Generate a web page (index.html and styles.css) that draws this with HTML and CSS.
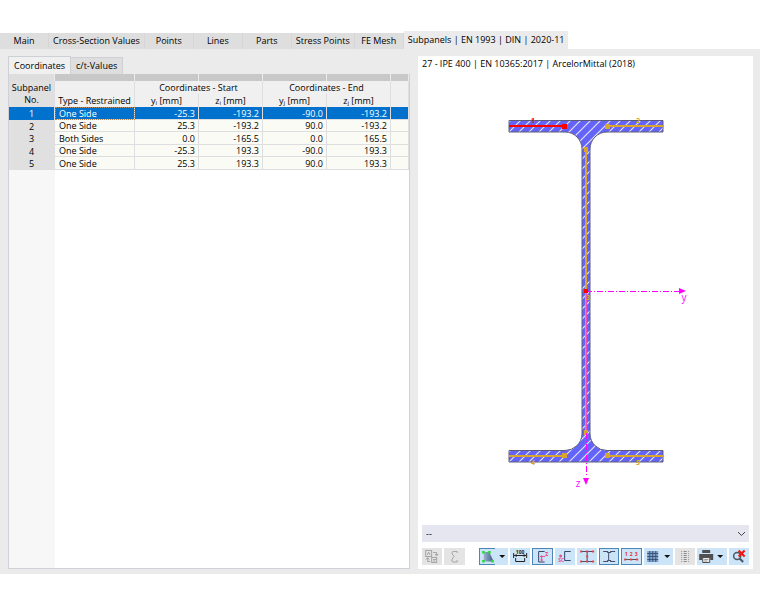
FILE: index.html
```
<!DOCTYPE html>
<html lang="en">
<head>
    <meta charset="UTF-8">
    <meta name="viewport" content="width=device-width, initial-scale=1.0">
    <title>Cross-Section - Subpanels</title>
    <link rel="stylesheet" href="styles.css">
</head>
<body>
    <div class="tabs" role="tablist">
        <button type="button" class="tab" role="tab">Main</button>
        <button type="button" class="tab" role="tab">Cross-Section Values</button>
        <button type="button" class="tab" role="tab">Points</button>
        <button type="button" class="tab" role="tab">Lines</button>
        <button type="button" class="tab" role="tab">Parts</button>
        <button type="button" class="tab" role="tab">Stress Points</button>
        <button type="button" class="tab" role="tab">FE Mesh</button>
        <button type="button" class="tab active" role="tab" aria-selected="true">Subpanels | EN 1993 | DIN | 2020-11</button>
    </div>
    <main class="content">
        <section class="data">
            <div class="subtabs" role="tablist">
                <button type="button" class="subtab active" role="tab" aria-selected="true">Coordinates</button>
                <button type="button" class="subtab" role="tab">c/t-Values</button>
            </div>
            <div class="table-frame">
                <table>
                    <colgroup>
                        <col class="col-no">
                        <col class="col-type">
                        <col class="col-value">
                        <col class="col-value">
                        <col class="col-value">
                        <col class="col-value">
                        <col>
                    </colgroup>
                    <thead>
                        <tr class="band">
                            <td></td><td></td><td></td><td></td><td></td><td></td><td></td>
                        </tr>
                        <tr>
                            <th rowspan="2" class="no">Subpanel<br>No.</th>
                            <th rowspan="2">Type - Restrained</th>
                            <th colspan="2" class="group">Coordinates - Start</th>
                            <th colspan="2" class="group">Coordinates - End</th>
                            <th rowspan="2"></th>
                        </tr>
                        <tr>
                            <th>y<sub>i</sub> [mm]</th>
                            <th>z<sub>i</sub> [mm]</th>
                            <th>y<sub>j</sub> [mm]</th>
                            <th>z<sub>j</sub> [mm]</th>
                        </tr>
                    </thead>
                    <tbody>
                        <tr class="selected">
                            <th>1</th><td>One Side</td><td>-25.3</td><td>-193.2</td><td>-90.0</td><td>-193.2</td><td></td>
                        </tr>
                        <tr>
                            <th>2</th><td>One Side</td><td>25.3</td><td>-193.2</td><td>90.0</td><td>-193.2</td><td></td>
                        </tr>
                        <tr>
                            <th>3</th><td>Both Sides</td><td>0.0</td><td>-165.5</td><td>0.0</td><td>165.5</td><td></td>
                        </tr>
                        <tr>
                            <th>4</th><td>One Side</td><td>-25.3</td><td>193.3</td><td>-90.0</td><td>193.3</td><td></td>
                        </tr>
                        <tr>
                            <th>5</th><td>One Side</td><td>25.3</td><td>193.3</td><td>90.0</td><td>193.3</td><td></td>
                        </tr>
                    </tbody>
                </table>
            </div>
        </section>

        <section class="preview">
            <h2>27 - IPE 400 | EN 10365:2017 | ArcelorMittal (2018)</h2>
            <svg class="drawing" viewBox="0 0 335 452">
                <defs>
                    <pattern id="hatch" width="10" height="10" patternUnits="userSpaceOnUse">
                        <rect width="10" height="10" fill="#6464fa"/>
                        <path d="M-1 11L11 -1M-1 1L1 -1M9 11L11 9" stroke="#e2e2f4" stroke-width="1.2"/>
                    </pattern>
                </defs>
                <!-- profile -->
                <path d="M91 47.5H245V59H189A17 17 0 0 0 172 76V361A17 17 0 0 0 189 377.5H245V389H91V377.5H147A17 17 0 0 0 164 361V76A17 17 0 0 0 147 59H91Z" fill="url(#hatch)" stroke="#5c5c78"/>
                <!-- subpanels -->
                <g stroke="#daa52d" stroke-width="2">
                    <path d="M189 53H246M168 76V360M91 383H148M189 383H246"/>
                </g>
                <path d="M91 53H148" stroke="#f00" stroke-width="2"/>
                <path d="M168.500 218V360" stroke="#f050b0" stroke-width="1"/>
                <g fill="#daa52d">
                    <rect x="187" y="51" width="5" height="5"/>
                    <rect x="166" y="74" width="4" height="5"/>
                    <rect x="166" y="357" width="4" height="5"/>
                    <rect x="144" y="380" width="5" height="5"/>
                    <rect x="187" y="380" width="5" height="5"/>
                </g>
                <rect x="144" y="51" width="5" height="5" fill="#f00"/>
                <g class="panel-no">
                    <text x="115" y="50" class="picked">1</text>
                    <text x="220" y="50">2</text>
                    <text x="170" y="227">3</text>
                    <text x="115" y="392">4</text>
                    <text x="220" y="392">5</text>
                </g>
                <!-- axes -->
                <path d="M168 218.500H262M168.500 360V404" fill="none" stroke="#f0f" stroke-dasharray="6 2 1 2"/>
                <path d="M261 215V221L268 218ZM165 405H171L168 412Z" fill="#f0f"/>
                <rect x="166" y="216" width="4" height="4" fill="#f00"/>
                <g class="axis-name">
                    <text x="266" y="228">y</text>
                    <text x="160" y="414">z</text>
                </g>
            </svg>

            <div class="controls">
                <div class="combo">
                    <select aria-label="Result">
                        <option>--</option>
                    </select>
                    <svg class="chevron" viewBox="0 0 9 6"><path d="M1 1L4.500 4.500L8 1" fill="none" stroke="#444"/></svg>
                </div>
                <div class="toolbar">
                    <button type="button" class="tool" aria-label="Translate" disabled>
                        <svg viewBox="0 0 20 17"><g fill="none" stroke="#a5a5a5"><rect x="3.500" y="2.500" width="6" height="6"/><path d="M5 7L6.500 4L8 7M11 4.500H14.500V7M13 6L14.500 8L16 6M5.500 10V13.500H8M4 11.500L5.500 9.500L7 11.500"/><rect x="9.500" y="9.500" width="5" height="5"/><path d="M11 11.500H14M11 13H13"/></g></svg>
                    </button>
                    <button type="button" class="tool" aria-label="Section" disabled>
                        <svg viewBox="0 0 20 17"><path d="M13 5V3.500H9Q7 4 8 6L10 8.500L8 11Q7 13.500 9 14H13V12" fill="none" stroke="#a5a5a5"/></svg>
                    </button>
                    <span class="spacer"></span>
                    <button type="button" class="tool split half" aria-label="Stress display">
                        <svg viewBox="0 0 29 17"><defs><linearGradient id="slate"><stop offset="0" stop-color="#9db4cc"/><stop offset="1" stop-color="#3c5a86"/></linearGradient></defs><path d="M4.500 4H10L14.500 13.500H4.500Z" fill="url(#slate)"/><path d="M3 3h2.500v2.500H3zM9 3h2.500v2.500H9zM3 12h2.500v2.500H3zM12 12h2.500v2.500H12z" fill="#25dc32"/><path d="M20 7H26L23 10Z" fill="#111"/></svg>
                    </button>
                    <button type="button" class="tool" aria-label="Dimensions">
                        <svg viewBox="0 0 20 17"><text x="10" y="6" class="num dark">100</text><path d="M3.500 5V10M16.500 5V10M4 7.500H16M5.500 10V13.500H14.500V10" fill="none" stroke="#222"/><path d="M4 7.500L6.500 6V9ZM16 7.500L13.500 6V9Z" fill="#222"/></svg>
                    </button>
                    <button type="button" class="tool on" aria-label="Principal axes">
                        <svg viewBox="0 0 20 17"><path d="M12.500 3.500H6.500V14H12.500" fill="none" stroke="#34486c"/><path d="M8 8.500H13M9.500 8V13M13 4.500H15.500L13.500 7.500H16" fill="none" stroke="#e2558e"/><path d="M7.500 8.500L10 7V10ZM8 11.500H11L9.500 14Z" fill="#e2558e"/></svg>
                    </button>
                    <button type="button" class="tool" aria-label="Shear center">
                        <svg viewBox="0 0 20 17"><path d="M15.500 3.500H9.500V12.500H15.500" fill="none" stroke="#34486c"/><circle cx="5.500" cy="8" r="1.500" fill="#e2558e"/><text x="6" y="14" class="num pink">SC</text></svg>
                    </button>
                    <button type="button" class="tool" aria-label="Stress points">
                        <svg viewBox="0 0 20 17"><path d="M4 3.500H16M4 13.500H16M10 4V13" stroke="#44506c"/><path d="M3 2.500h2v2H3zM15 2.500h2v2H15zM9 2.500h2v2H9zM9 7.500h2v2H9zM3 12.500h2v2H3zM9 12.500h2v2H9zM15 12.500h2v2H15z" fill="#e84040"/></svg>
                    </button>
                    <button type="button" class="tool on" aria-label="Subpanels">
                        <svg viewBox="0 0 20 17"><path d="M4 3.500H9M11 3.500H16M4 13.500H9M11 13.500H16M9.500 5V12M8 4.500H12M8 12.500H12" stroke="#44506c"/></svg>
                    </button>
                    <button type="button" class="tool on" aria-label="Numbering">
                        <svg viewBox="0 0 20 17"><text x="5" y="8" class="num red">1</text><text x="10" y="8" class="num red">2</text><text x="15" y="8" class="num red">3</text><path d="M4 11.500H16" stroke="#555"/><path d="M3 10.500h2v2H3zM9 10.500h2v2H9zM15 10.500h2v2H15z" fill="#e84040"/></svg>
                    </button>
                    <button type="button" class="tool split" aria-label="Grid">
                        <svg viewBox="0 0 29 17"><rect x="3" y="3" width="11" height="11" fill="#7fa3cc"/><path d="M5.500 3V14M8.500 3V14M11.500 3V14M3 5.500H14M3 8.500H14M3 11.500H14" stroke="#304868" stroke-width=".8"/><path d="M20 7H26L23 10Z" fill="#111"/></svg>
                    </button>
                    <button type="button" class="tool" aria-label="Values" disabled>
                        <svg viewBox="0 0 20 17"><path d="M6.500 3V15M13.500 3V15" stroke="#999" stroke-dasharray="1 1"/><path d="M10 3V15" stroke="#888" stroke-width="3" stroke-dasharray="1 1"/></svg>
                    </button>
                    <button type="button" class="tool split" aria-label="Print">
                        <svg viewBox="0 0 29 17"><path d="M5 2H13V5H5ZM2 6H16V12H13V10H5V12H2Z" fill="#505050"/><path d="M5.500 9.500H12.500V14.500H5.500Z" fill="#eee" stroke="#505050"/><path d="M7 11.500H11M7 13H10" stroke="#777" stroke-width=".7"/><path d="M20 7H26L23 10Z" fill="#111"/></svg>
                    </button>
                    <button type="button" class="tool" aria-label="Reset zoom">
                        <svg viewBox="0 0 20 17"><circle cx="8" cy="8" r="3.500" fill="none" stroke="#4c5864" stroke-width="1.500"/><path d="M10.500 10.500L14 14" stroke="#4c5864" stroke-width="2"/><path d="M9.500 2.500L15.500 8.500M15.500 2.500L9.500 8.500" stroke="#f01414" stroke-width="2"/></svg>
                    </button>
                </div>
            </div>
        </section>
    </main>
</body>
</html>
```

FILE: styles.css
```
* {
    box-sizing: border-box;
}
body {
    display: flex;
    flex-direction: column;
    min-height: 100vh;
    margin: 0;
    padding: 31px 0 32px;
    background: #fff;
    color: #000;
    font-family: "Open Sans", "Noto Sans", sans-serif;
    font-size: 9px;
    line-height: 12px;
}
button, select {
    margin: 0;
    padding: 0;
    border: none;
    color: inherit;
    font: inherit;
}
.tabs {
    display: flex;
    align-items: flex-end;
}
.tab {
    min-width: 49px;
    height: 16px;
    padding: 0 4px;
    background: #dedede;
    border-right: 1px solid #d6d6d6;
    white-space: nowrap;
}
.tab.active {
    height: 18px;
    background: #ebebeb;
    border: none;
}
.content {
    display: grid;
    grid-template-columns: 6fr 5fr;
    gap: 8px;
    flex: 1;
    padding: 7px 7px 5px 8px;
    background: #ebebeb;
}
.data {
    display: flex;
    flex-direction: column;
    min-width: 0;
}
.subtabs {
    display: flex;
    align-items: flex-end;
}
.subtab {
    height: 17px;
    padding: 0 5px;
    background: #dedede;
    border: 1px solid #cfcfd6;
    border-width: 1px 1px 0 0;
}
.subtab.active {
    height: 18px;
    background: #f0f0f0;
    border-left-width: 1px;
}
.table-frame {
    flex: 1;
    border: 1px solid #d0d0d8;
    border-top: none;
    background: linear-gradient(to right, #f7f7f7 46px, #fff 46px);
}

/* table */
table {
    width: 100%;
    table-layout: fixed;
    border-collapse: separate;
    border-spacing: 0;
}
.col-no {
    width: 46px;
}
.col-type {
    width: 80px;
}
.col-value {
    width: 64px;
}
th, td {
    height: 12px;
    padding: 0 3px;
    border-right: 1px solid #dedee0;
    font-weight: normal;
    line-height: 11px;
    white-space: nowrap;
}
.band td {
    height: 7px;
    background: #c8c8c8;
    border-color: #ebebeb;
}
.band td:first-child {
    background: #dedede;
}
thead th {
    height: 13px;
    padding-bottom: 1px;
    background: #f0f0f0;
    vertical-align: bottom;
}
thead th.no {
    padding: 0 0 1px;
    background: #e0e0e0;
    line-height: 12px;
}
thead .group {
    vertical-align: middle;
}
sub {
    font-size: 6px;
    line-height: 0;
    vertical-align: -1px;
}
tbody th {
    background: #e0e0e0;
}
tbody td {
    background: #fafbf5;
    border-bottom: 1px solid #dedee0;
    text-align: right;
}
tbody tr:nth-child(odd) td {
    height: 13px;
}
tbody td:nth-child(2) {
    padding-left: 4px;
    text-align: left;
}
tbody .selected th,
tbody .selected td {
    background: #0072ce;
    color: #fff;
}
tbody .selected td:nth-child(2) {
    outline: 1px dotted #b08860;
    outline-offset: -1px;
}

/* section preview */
.preview {
    display: flex;
    flex-direction: column;
    min-width: 0;
    background: #fff;
}
.preview h2 {
    margin: 0;
    padding: 2px 4px 3px;
    font-size: 9px;
    font-weight: normal;
}
.drawing {
    flex: 1;
    width: 100%;
    min-height: 0;
}
.panel-no {
    fill: #daa52d;
    font-size: 7px;
    font-weight: bold;
    text-anchor: middle;
}
.panel-no .picked {
    fill: #f00;
}
.axis-name {
    fill: #f0f;
    font-size: 10px;
    text-anchor: middle;
}
.controls {
    padding: 0 4px 4px;
}
.combo {
    position: relative;
}
.combo select {
    display: block;
    width: 100%;
    height: 17px;
    padding: 0 4px;
    background: #e6e6f1;
    border-radius: 0;
    appearance: none;
}
.chevron {
    position: absolute;
    top: 6px;
    right: 3px;
    width: 9px;
    height: 6px;
    pointer-events: none;
}
.toolbar {
    display: flex;
    gap: 2px;
    margin-top: 6px;
}
.spacer {
    flex: none;
    width: 10px;
}
.tool {
    flex: 20 1 0;
    height: 17px;
    background: #cce4f7;
}
.tool.split {
    flex-grow: 29;
}
.tool.on {
    box-shadow: inset 0 0 0 1px #4a86b8;
}
.tool.half {
    background: linear-gradient(#4a86b8, #4a86b8) 0 0 / 16px 1px no-repeat,
        linear-gradient(#4a86b8, #4a86b8) 0 100% / 16px 1px no-repeat,
        linear-gradient(#4a86b8, #4a86b8) 0 0 / 1px 100% no-repeat,
        #cce4f7;
}
.tool:disabled {
    background: #e4e4e4;
}
.tool svg {
    display: block;
    width: 100%;
    height: 17px;
}
.num {
    font-size: 5px;
    font-weight: bold;
    text-anchor: middle;
}
.dark {
    fill: #222;
}
.pink {
    fill: #e2558e;
}
.red {
    fill: #e03030;
}
```
